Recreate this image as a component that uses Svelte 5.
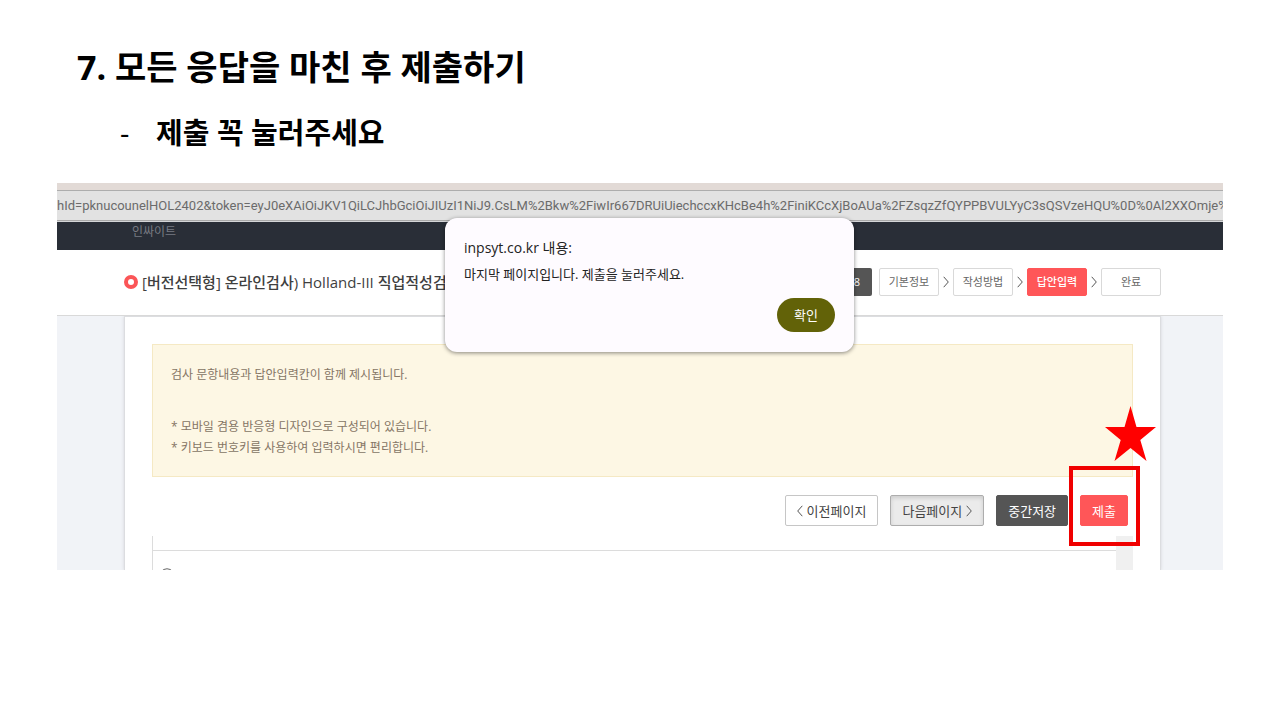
<script>
  const steps = [
    { label: '기본정보', current: false },
    { label: '작성방법', current: false },
    { label: '답안입력', current: true },
    { label: '완료', current: false }
  ];
  const address =
    'hId=pknucounelHOL2402&token=eyJ0eXAiOiJKV1QiLCJhbGciOiJIUzI1NiJ9.CsLM%2Bkw%2FiwIr667DRUiUiechccxKHcBe4h%2FiniKCcXjBoAUa%2FZsqzZfQYPPBVULYyC3sQSVzeHQU%0D%0Al2XXOmje%2Bc';
</script>

<main class="slide">
  <h1>7. 모든 응답을 마친 후 제출하기</h1>
  <ul class="points">
    <li>제출 꼭 눌러주세요</li>
  </ul>

  <section class="browser">
    <div class="tabstrip"></div>
    <div class="address">{address}</div>
    <nav class="topbar"><a href="#home">인싸이트</a></nav>

    <header class="head">
      <h2>
        <svg class="dot" viewBox="0 0 14 14" aria-hidden="true">
          <circle cx="7" cy="7" r="5" fill="#fff" stroke="#fb5557" stroke-width="4" />
        </svg>
        <span>[버전선택형] 온라인검사) Holland-III 직업적성검사</span>
      </h2>
      <div class="progress">
        <span class="count">8</span>
        <ol>
          {#each steps as step, i}
            <li>
              {#if i > 0}
                <svg class="arrow" viewBox="0 0 6 12" aria-hidden="true"><path d="M0.7 0.8 5.3 6 0.7 11.2" /></svg>
              {/if}
              <span class="step" class:current={step.current}>{step.label}</span>
            </li>
          {/each}
        </ol>
      </div>
    </header>

    <div class="page">
      <div class="card">
        <div class="notice">
          <p>검사 문항내용과 답안입력칸이 함께 제시됩니다.</p>
          <p class="gap">* 모바일 겸용 반응형 디자인으로 구성되어 있습니다.</p>
          <p>* 키보드 번호키를 사용하여 입력하시면 편리합니다.</p>
        </div>
        <div class="actions">
          <button type="button">
            <svg class="arrow" viewBox="0 0 6 12" aria-hidden="true"><path d="M5.3 0.8 0.7 6 5.3 11.2" /></svg>이전페이지
          </button>
          <button type="button" class="pressed">
            다음페이지<svg class="arrow" viewBox="0 0 6 12" aria-hidden="true"><path d="M0.7 0.8 5.3 6 0.7 11.2" /></svg>
          </button>
          <button type="button" class="dark">중간저장</button>
          <div class="submit">
            <button type="button" class="red">제출</button>
            <div class="frame"></div>
            <svg class="star" viewBox="0 0 51 55" aria-hidden="true">
              <path fill="#f00" d="M25.5 0 31.5 21H51L35.3 34 41.5 55 25.5 42 9.5 55 15.7 34 0 21H19.5Z" />
            </svg>
          </div>
        </div>
        <div class="questions">
          <div class="sheet">
            <div class="sheet-head"></div>
            <svg class="number" viewBox="0 0 16 4" aria-hidden="true"><path d="M2 4.5Q8-1 14 4.5" /></svg>
          </div>
          <div class="track"></div>
        </div>
      </div>
    </div>

    <div class="dialog" role="alertdialog" aria-labelledby="dialog-title" aria-describedby="dialog-text">
      <h3 id="dialog-title">inpsyt.co.kr 내용:</h3>
      <p id="dialog-text">마지막 페이지입니다. 제출을 눌러주세요.</p>
      <button type="button">확인</button>
    </div>
  </section>
</main>

<style>
  :global(body) {
    margin: 0;
    background: #fff;
  }
  * {
    box-sizing: border-box;
  }
  h1,
  h2,
  h3,
  p,
  ul,
  ol {
    margin: 0;
    padding: 0;
    list-style: none;
    font-weight: 400;
  }
  button {
    font: inherit;
    margin: 0;
  }
  .slide {
    padding: 43px 57px 0;
    font-family: 'Open Sans', 'Noto Sans CJK KR', sans-serif;
    color: #000;
  }
  h1 {
    padding-left: 20px;
    font: 700 34px/48px 'Open Sans', 'Noto Sans CJK KR', sans-serif;
  }
  .points {
    padding: 22px 0 0 63px;
    font: 700 29px/40px 'Open Sans', 'Noto Sans CJK KR', sans-serif;
  }
  .points li {
    display: flex;
  }
  .points li::before {
    content: '-';
    width: 36px;
    font-weight: 400;
  }
  .browser {
    position: relative;
    margin-top: 30px;
    font-size: 12px;
  }
  .tabstrip {
    height: 8px;
    background: #e2dad6;
    border-bottom: 1px solid #adadad;
  }
  .address {
    height: 30px;
    overflow: hidden;
    white-space: nowrap;
    background: #e2e2e2;
    border-bottom: 1px solid #a9a9a9;
    color: #6b6b6b;
    font: 13px/29px Roboto, sans-serif;
  }
  .topbar {
    height: 29px;
    padding-left: 75px;
    background: #292e37;
    border-top: 1px solid #d4d5d7;
    line-height: 20px;
  }
  .topbar a {
    color: #777b82;
    text-decoration: none;
  }
  .head {
    display: flex;
    justify-content: space-between;
    align-items: center;
    height: 66px;
    padding: 0 62px 2px 67px;
    background: #fff;
    border-bottom: 1px solid #d9d9d9;
  }
  h2 {
    display: flex;
    align-items: center;
    gap: 4px;
    color: #3f3f3f;
    font-size: 15px;
    font-weight: 500;
    line-height: 22px;
    white-space: nowrap;
  }
  .dot {
    width: 14px;
    height: 14px;
  }
  .progress,
  .progress ol,
  .progress li {
    display: flex;
    align-items: center;
  }
  .progress {
    gap: 7px;
    font-size: 11px;
  }
  .progress ol,
  .progress li {
    gap: 4px;
  }
  .count {
    width: 60px;
    padding-right: 12px;
    border-radius: 2px;
    background: #555;
    color: #fff;
    line-height: 28px;
    text-align: right;
  }
  .step {
    width: 60px;
    border: 1px solid #d9d9d9;
    border-radius: 2px;
    color: #666;
    line-height: 26px;
    text-align: center;
  }
  .step.current {
    background: #ff5658;
    border-color: #ff5658;
    color: #fff;
    font-weight: 500;
  }
  .arrow {
    flex: none;
    width: 6px;
    height: 12px;
    fill: none;
    stroke: #555;
    stroke-width: 1;
  }
  .page {
    padding: 0 62px 0 67px;
    background: #f1f3f7;
  }
  .card {
    padding: 27px 27px 0;
    background: #fff;
    border: solid #dcdde0;
    border-width: 1px 1px 0;
    box-shadow: 0 0 3px #d5d6da;
    clip-path: inset(0 -4px);
  }
  .notice {
    padding: 19px 18px 18px;
    background: #fdf7e4;
    border: 1px solid #f5e9c4;
    color: #857565;
    line-height: 21px;
  }
  .notice .gap {
    margin-top: 31px;
  }
  .actions {
    display: flex;
    justify-content: flex-end;
    gap: 12px;
    padding: 18px 5px 10px 0;
    font-size: 13px;
  }
  .actions button {
    display: flex;
    align-items: center;
    gap: 4px;
    height: 31px;
    padding: 0 11px;
    border: 1px solid #c6c6c6;
    border-radius: 2px;
    background: #fff;
    color: #444;
    line-height: 20px;
  }
  .actions .pressed {
    background: #ebebeb;
    border-color: #adadad;
    box-shadow: inset 0 2px 4px #0002;
  }
  .actions .dark {
    background: #555;
    border-color: #555;
    color: #fff;
  }
  .actions .red {
    background: #ff5658;
    border-color: #ff5658;
    color: #fff;
  }
  .submit {
    position: relative;
  }
  .frame {
    position: absolute;
    inset: -29px -12px -20px -11px;
    z-index: 1;
    border: 4px solid #f00000;
    pointer-events: none;
  }
  .star {
    position: absolute;
    right: -28px;
    bottom: 65px;
    width: 51px;
    height: 55px;
  }
  .questions {
    display: flex;
    height: 34px;
    overflow: hidden;
  }
  .sheet {
    flex: 1;
    border-left: 1px solid #dcdcdc;
  }
  .sheet-head {
    height: 15px;
    border-bottom: 1px solid #dcdcdc;
  }
  .number {
    display: block;
    width: 16px;
    height: 4px;
    margin: 16px 0 0 6px;
    fill: none;
    stroke: #666;
  }
  .track {
    width: 17px;
    background: #f0f0f0;
  }
  .dialog {
    position: absolute;
    top: 35px;
    left: calc(50% - 195px);
    display: flex;
    flex-direction: column;
    width: 409px;
    padding: 18px 19px 19px;
    border-radius: 12px;
    background: #fefbff;
    box-shadow: 0 1px 4px #0007;
    color: #222;
    font-size: 13px;
  }
  .dialog h3 {
    font-size: 14px;
    line-height: 24px;
  }
  .dialog p {
    margin-top: 4px;
    line-height: 20px;
  }
  .dialog button {
    align-self: flex-end;
    width: 58px;
    height: 34px;
    margin-top: 14px;
    margin-bottom: 1px;
    padding: 0;
    border: 0;
    border-radius: 17px;
    background: #626208;
    color: #fff;
    line-height: 32px;
  }
</style>
